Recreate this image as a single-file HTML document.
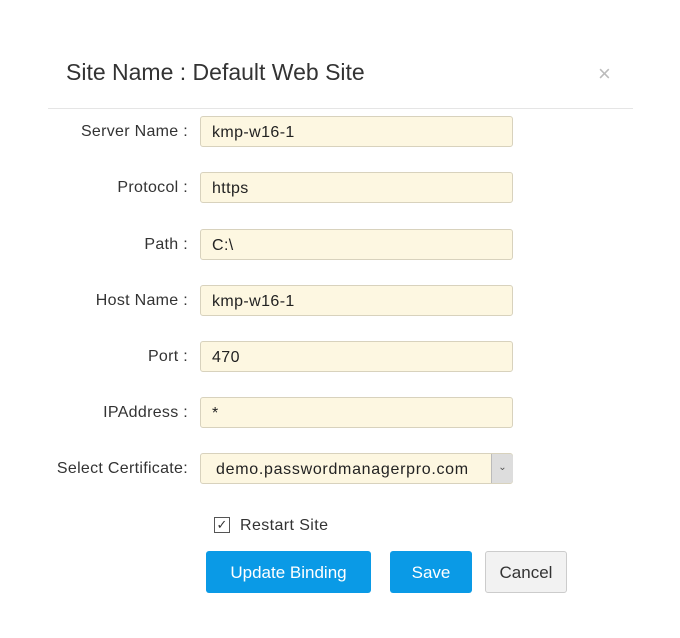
<!DOCTYPE html>
<html><head><style>
body{margin:0;width:680px;height:638px;background:#fff;font-family:"Liberation Sans",sans-serif;color:#333;position:relative;overflow:hidden}
.a{position:absolute}
.t{left:66px;top:59px;font-size:23px;color:#333;letter-spacing:0px}
.x{left:598px;top:61px;font-size:22px;color:#bbb}
.hr{left:48px;top:108px;width:585px;height:1px;background:#e5e5e5}
.l{right:492px;font-size:16px;color:#333;white-space:nowrap;letter-spacing:0.3px}
.in{left:200px;background:#fdf7e1;border:1px solid #d8d2bd;border-radius:3px;font-size:16px;line-height:31px;padding-left:11px;box-sizing:border-box;width:313px;height:31px;color:#222;letter-spacing:0.4px}
.btn{top:551px;height:42px;border-radius:3px;font-size:17px;line-height:44px;text-align:center;color:#fff;background:#0a9ae6}
</style></head><body>
<div class="a t">Site Name : Default Web Site</div>
<div class="a x">×</div>
<div class="a hr"></div>
<div class="a l" style="top:123px">Server Name :</div><div class="a in" style="top:116px">kmp-w16-1</div>
<div class="a l" style="top:179px">Protocol :</div><div class="a in" style="top:172px">https</div>
<div class="a l" style="top:236px">Path :</div><div class="a in" style="top:229px">C:\</div>
<div class="a l" style="top:292px">Host Name :</div><div class="a in" style="top:285px">kmp-w16-1</div>
<div class="a l" style="top:348px">Port :</div><div class="a in" style="top:341px">470</div>
<div class="a l" style="top:404px">IPAddress :</div><div class="a in" style="top:397px">*</div>
<div class="a l" style="top:460px">Select Certificate:</div>
<div class="a in" style="top:453px;padding-left:15px;letter-spacing:0.7px">demo.passwordmanagerpro.com</div>
<div class="a" style="left:491px;top:454px;width:21px;height:29px;background:#ddd;border-left:1px solid #bbb;border-radius:0 3px 3px 0;font-size:10px;text-align:center;line-height:28px;color:#555">&#8964;</div>
<div class="a" style="left:214px;top:517px;width:14px;height:14px;border:1px solid #555;font-size:13px;line-height:14px;text-align:center">✓</div>
<div class="a" style="left:240px;top:517px;font-size:16px;letter-spacing:0.4px">Restart Site</div>
<div class="a btn" style="left:206px;width:165px">Update Binding</div>
<div class="a btn" style="left:390px;width:82px">Save</div>
<div class="a btn" style="left:485px;width:80px;background:#f2f2f2;border:1px solid #ccc;color:#333;height:40px;line-height:42px">Cancel</div>
</body></html>
